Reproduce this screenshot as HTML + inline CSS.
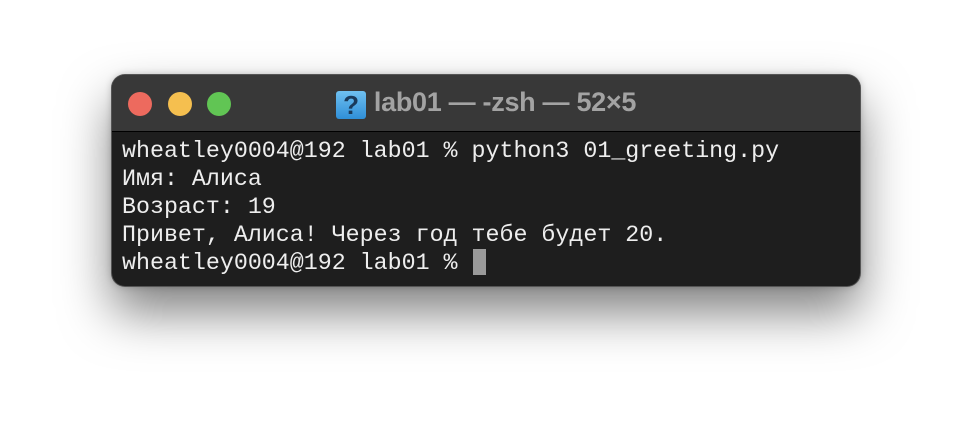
<!DOCTYPE html>
<html><head><meta charset="utf-8"><style>
html,body{margin:0;padding:0;background:#fff;width:972px;height:434px;overflow:hidden}
.win{position:absolute;left:112px;top:75px;width:748px;height:211px;border-radius:13px;background:#1e1e1e;
box-shadow:0 0 0 1px #555,0 26px 50px rgba(0,0,0,.5),0 0 8px rgba(0,0,0,.25);overflow:hidden}
.tb{position:absolute;left:0;top:0;width:748px;height:56px;background:#383838;border-bottom:1px solid #000}
.d{position:absolute;top:17px;width:24px;height:24px;border-radius:50%}
.title{position:absolute;left:0;right:0;top:12px;text-align:center;font:bold 27px "Liberation Sans",sans-serif;color:#a3a3a3;letter-spacing:-.3px}
.ic{display:inline-block;width:30px;height:28px;background:linear-gradient(#6fc0f0,#2f8fd8);border-radius:3px;color:#1a3a5a;font-size:26px;line-height:28px;vertical-align:-3px;margin-right:8px}
.term{position:absolute;left:10px;top:62px;font:23.3px/28px "Liberation Mono","DejaVu Sans Mono",monospace;color:#eee;white-space:pre}
.cur{position:absolute;left:361px;top:174px;width:13px;height:26px;background:#9a9a9a}
</style></head><body>
<div class="win">
<div class="tb">
<div class="d" style="left:16px;background:#ed6a5e"></div>
<div class="d" style="left:56px;background:#f5bf4f"></div>
<div class="d" style="left:95px;background:#61c554"></div>
<div class="title"><span class="ic">?</span>lab01 — -zsh — 52×5</div>
</div>
<div class="term">wheatley0004@192 lab01 % python3 01_greeting.py
Имя: Алиса
Возраст: 19
Привет, Алиса! Через год тебе будет 20.
wheatley0004@192 lab01 % </div>
<div class="cur"></div>
</div>
</body></html>
